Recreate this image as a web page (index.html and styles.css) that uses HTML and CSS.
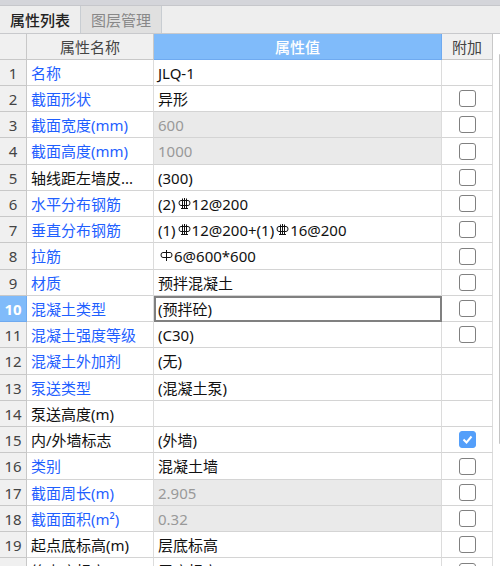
FILE: index.html
```html
<!DOCTYPE html>
<html lang="zh-CN">
<head>
    <meta charset="UTF-8">
    <meta name="viewport" content="width=device-width, initial-scale=1.0">
    <title>属性列表</title>
    <link rel="stylesheet" href="styles.css">
</head>
<body>

<!-- rebar grade symbols -->
<svg class="symbols" aria-hidden="true">
    <symbol id="rebar-c" viewBox="0 0 13 13">
        <path d="M3 2.5h7q2 0 2 2.5t-2 2.5h-7q-2 0-2-2.5t2-2.5zM4.5 0.5v10M6.5 0v11M8.5 0.5v10M3 10.5h7" />
    </symbol>
    <symbol id="rebar-a" viewBox="0 0 13 13">
        <path d="M3 2.5h7q2 0 2 2.5t-2 2.5h-7q-2 0-2-2.5t2-2.5zM6.5 0v11" />
    </symbol>
</svg>

<div class="panel">
    <div class="tabs" role="tablist">
        <button class="tab active" type="button" role="tab" aria-selected="true">属性列表</button>
        <button class="tab" type="button" role="tab" aria-selected="false">图层管理</button>
    </div>

    <div class="content">
        <table class="props">
            <colgroup>
                <col class="col-num">
                <col class="col-name">
                <col class="col-value">
                <col class="col-extra">
            </colgroup>
            <thead>
                <tr><th></th><th>属性名称</th><th class="current">属性值</th><th>附加</th></tr>
            </thead>
            <tbody>
                <tr><th>1</th><td class="key">名称</td><td>JLQ-1</td><td></td></tr>
                <tr><th>2</th><td class="key">截面形状</td><td>异形</td><td class="check"><input type="checkbox" aria-label="附加 截面形状"></td></tr>
                <tr><th>3</th><td class="key">截面宽度(mm)</td><td class="readonly">600</td><td class="check"><input type="checkbox" aria-label="附加 截面宽度"></td></tr>
                <tr><th>4</th><td class="key">截面高度(mm)</td><td class="readonly">1000</td><td class="check"><input type="checkbox" aria-label="附加 截面高度"></td></tr>
                <tr><th>5</th><td>轴线距左墙皮...</td><td>(300)</td><td class="check"><input type="checkbox" aria-label="附加 轴线距左墙皮"></td></tr>
                <tr><th>6</th><td class="key">水平分布钢筋</td><td>(2)<svg class="rebar"><use href="#rebar-c" /></svg>12@200</td><td class="check"><input type="checkbox" aria-label="附加 水平分布钢筋"></td></tr>
                <tr><th>7</th><td class="key">垂直分布钢筋</td><td>(1)<svg class="rebar"><use href="#rebar-c" /></svg>12@200+(1)<svg class="rebar"><use href="#rebar-c" /></svg>16@200</td><td class="check"><input type="checkbox" aria-label="附加 垂直分布钢筋"></td></tr>
                <tr><th>8</th><td class="key">拉筋</td><td><svg class="rebar"><use href="#rebar-a" /></svg>6@600*600</td><td class="check"><input type="checkbox" aria-label="附加 拉筋"></td></tr>
                <tr><th>9</th><td class="key">材质</td><td>预拌混凝土</td><td class="check"><input type="checkbox" aria-label="附加 材质"></td></tr>
                <tr><th class="current">10</th><td class="key">混凝土类型</td><td class="selected">(预拌砼)</td><td class="check"><input type="checkbox" aria-label="附加 混凝土类型"></td></tr>
                <tr><th>11</th><td class="key">混凝土强度等级</td><td>(C30)</td><td class="check"><input type="checkbox" aria-label="附加 混凝土强度等级"></td></tr>
                <tr><th>12</th><td class="key">混凝土外加剂</td><td>(无)</td><td></td></tr>
                <tr><th>13</th><td class="key">泵送类型</td><td>(混凝土泵)</td><td></td></tr>
                <tr><th>14</th><td>泵送高度(m)</td><td></td><td></td></tr>
                <tr><th>15</th><td>内/外墙标志</td><td>(外墙)</td><td class="check"><input type="checkbox" aria-label="附加 内/外墙标志" checked></td></tr>
                <tr><th>16</th><td class="key">类别</td><td>混凝土墙</td><td class="check"><input type="checkbox" aria-label="附加 类别"></td></tr>
                <tr><th>17</th><td class="key">截面周长(m)</td><td class="readonly">2.905</td><td class="check"><input type="checkbox" aria-label="附加 截面周长"></td></tr>
                <tr><th>18</th><td class="key">截面面积(m²)</td><td class="readonly">0.32</td><td class="check"><input type="checkbox" aria-label="附加 截面面积"></td></tr>
                <tr><th>19</th><td>起点底标高(m)</td><td>层底标高</td><td class="check"><input type="checkbox" aria-label="附加 起点底标高"></td></tr>
                <tr><th>20</th><td>终点底标高(m)</td><td>层底标高</td><td class="check"><input type="checkbox" aria-label="附加 终点底标高"></td></tr>
            </tbody>
        </table>
        <div class="scrollbar"><div class="thumb"></div></div>
    </div>
</div>

</body>
</html>
```

FILE: styles.css
```css
* {
    box-sizing: border-box;
}
body {
    margin: 0;
    font-family: "Noto Sans", "Noto Sans CJK SC", sans-serif;
    font-size: 15px;
    line-height: 20px;
    color: #111;
    background-color: #fff;
}
.symbols {
    display: none;
}
.panel {
    display: flex;
    flex-direction: column;
    height: 100vh;
    overflow: hidden;
    border-top: 5px solid #d4d5da;
}
.tabs {
    display: flex;
    flex: none;
    background-color: #eee;
    border-top: 1px solid #c6c7cb;
    border-bottom: 1px solid #c8c9cc;
}
.tab {
    height: 27px;
    padding: 0 10px;
    border: 0;
    border-right: 1px solid #c8cdd2;
    background-color: #e0e0e0;
    color: #888;
    font: inherit;
}
.tab.active {
    background-color: #eee;
    color: #222;
    font-weight: 500;
}
.content {
    display: flex;
    flex: 1;
    align-items: flex-start;
    min-height: 0;
}
.props {
    flex: 1;
    table-layout: fixed;
    border-collapse: separate;
    border-spacing: 0;
}
.col-num {
    width: 27px;
}
.col-name {
    width: 127px;
}
.col-extra {
    width: 51px;
}
.props tr {
    height: 26px;
}
.props tbody tr:nth-child(4n) {
    height: 27px;
}
.props th,
.props td {
    padding: 0 4px;
    border-right: 1px solid #dcdcdc;
    border-bottom: 1px solid #d4d4d4;
    font-weight: normal;
    text-align: left;
    white-space: nowrap;
    overflow: hidden;
}
.props th {
    padding: 0;
    background-color: #f0f0f0;
    border-color: #c8c8c8;
    color: #444;
    text-align: center;
}
.props .key {
    color: #1f5fff;
}
.props .readonly {
    background-color: #eaeaea;
    color: #999;
}
.props .current {
    background-color: #80bbfa;
    border-color: #6faaf0;
    color: #fff;
    font-weight: 500;
}
.props tbody .current {
    font-weight: bold;
}
.props .selected {
    outline: 2px solid #808080;
    outline-offset: -2px;
}
.props .check {
    padding: 0;
    text-align: center;
}
.check input {
    appearance: none;
    display: block;
    width: 17px;
    height: 17px;
    margin: 0 auto;
    border: 1px solid #808080;
    border-radius: 3px;
    background-color: #fff;
}
.check input:checked {
    border-color: #549ffa;
    background: #549ffa url("data:image/svg+xml,%3Csvg xmlns='http://www.w3.org/2000/svg' viewBox='0 0 15 15'%3E%3Cpath d='M3.5 7.5l3 3 5-6' fill='none' stroke='white' stroke-width='2'/%3E%3C/svg%3E") center / 15px 15px no-repeat;
}
.rebar {
    width: 13px;
    height: 13px;
    margin: 0 1px 0 2px;
    vertical-align: -1px;
    fill: none;
    stroke: #111;
    stroke-width: 1;
}
.scrollbar {
    width: 7px;
    padding: 20px 0 0 6px;
}
.thumb {
    height: 390px;
    background-color: #c4c4c4;
    border-radius: 1px 0 0 1px;
}
```
